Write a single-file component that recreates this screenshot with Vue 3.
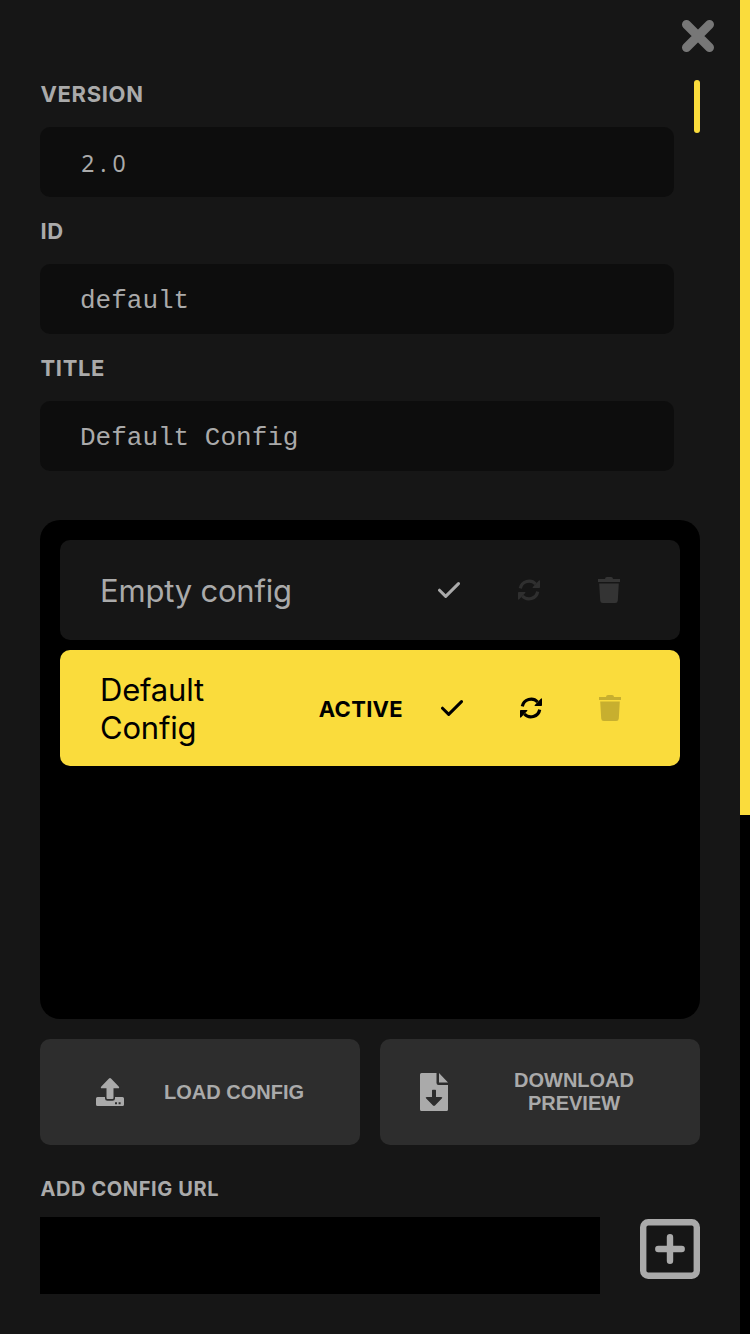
<script setup>
const fields = [
  { label: 'VERSION', value: '2.0', numeric: true },
  { label: 'ID', value: 'default' },
  { label: 'TITLE', value: 'Default Config' },
]
const configs = [
  { name: 'Empty config', active: false },
  { name: 'Default Config', active: true },
]
</script>

<template>
  <div class="page">
    <main class="panel">
      <header class="top">
        <svg class="close" viewBox="0 0 34 34"><path d="M5.5 5.5 28.5 28.5M28.5 5.5 5.5 28.5" /></svg>
      </header>

      <section class="details">
        <div class="fields">
          <div v-for="f in fields" :key="f.label" class="field">
            <label class="label">{{ f.label }}</label>
            <div v-if="f.numeric" class="value numeric"><span v-for="(ch, i) in f.value" :key="i">{{ ch }}</span></div>
            <div v-else class="value">{{ f.value }}</div>
          </div>
        </div>
        <div class="scroll-thumb"></div>
      </section>

      <section class="list">
        <article v-for="c in configs" :key="c.name" class="row" :class="{ active: c.active }">
          <span class="name">{{ c.name }}</span>
          <span v-if="c.active" class="tag">ACTIVE</span>
          <svg class="check" viewBox="0 0 22 16"><path d="M1.5 8.2 7.7 14.4 20.5 1.6" /></svg>
          <svg class="sync" viewBox="0 0 22 22">
            <path class="arc" d="M2.3 9.4A8.9 8.9 0 0 1 17.6 5M19.7 12.6A8.9 8.9 0 0 1 4.4 17" />
            <path d="M22 2V8.2Q22 9 21.2 9H15.2Q14 9 14.8 8.1L20.8 1.7Q22 .7 22 2ZM0 20V13.8Q0 13 .8 13H6.8Q8 13 7.2 13.9L1.2 20.3Q0 21.3 0 20Z" />
          </svg>
          <svg class="trash" viewBox="0 0 22 26">
            <path d="M0 2H7Q7 0 9 0H13Q15 0 15 2H22V5H0ZM1.2 6.5H20.8L19.8 23.5Q19.6 26 17.2 26H4.8Q2.4 26 2.2 23.5Z" />
          </svg>
        </article>
      </section>

      <section class="actions">
        <button class="load">
          <svg class="upload" viewBox="0 0 28 28">
            <path fill-rule="evenodd" d="M13 .5Q14 -.4 15 .5L22.7 8.5Q24 10.3 22 10.3H17.5V20Q17.5 21 16.5 21H11.5Q10.5 21 10.5 20V10.3H6Q4 10.3 5.3 8.5ZM1.5 19H9V20.5Q9 22.8 11.5 22.8H16.5Q19 22.8 19 20.5V19H26.5Q28 19 28 20.5V26.5Q28 28 26.5 28H1.5Q0 28 0 26.5V20.5Q0 19 1.5 19ZM19 24.3V26.3H21V24.3ZM22.6 24.3V26.3H24.6V24.3Z" />
          </svg>
          <span>LOAD CONFIG</span>
        </button>
        <button class="download">
          <svg class="file" viewBox="0 0 28 38">
            <path fill-rule="evenodd" d="M1.5 0H16.5V10Q16.5 12 18.5 12H28V36.5Q28 38 26.5 38H1.5Q0 38 0 36.5V1.5Q0 0 1.5 0ZM12 17.5V24H6.8Q5 24 6.2 25.6L13 32.5Q14 33.4 15 32.5L21.8 25.6Q23 24 21.2 24H16V17.5Q16 16.8 15.3 16.8H12.7Q12 16.8 12 17.5ZM19 0 28 9.5H19Z" />
          </svg>
          <span>DOWNLOAD PREVIEW</span>
        </button>
      </section>

      <section class="add">
        <label class="add-label">ADD CONFIG URL</label>
        <div class="add-row">
          <div class="url"></div>
          <svg class="plus" viewBox="0 0 60 60">
            <rect x="3.2" y="3.2" width="53.6" height="53.6" rx="5" />
            <path d="M18.3 30H41.7M30 18.3V41.7" />
          </svg>
        </div>
      </section>
    </main>
    <aside class="page-scroll"></aside>
  </div>
</template>

<style>
body {
  margin: 0;
  background: #000;
}
</style>

<style scoped>
.page {
  display: flex;
  width: 750px;
  height: 1334px;
  overflow: hidden;
  background: #000;
  color: #aaa;
  font-family: Inter, "Liberation Sans", sans-serif;
}
.page * {
  box-sizing: border-box;
}
.panel {
  width: 740px;
  height: 1334px;
  padding: 0 40px;
  background: #161616;
}
.page-scroll {
  width: 10px;
  height: 815px;
  background: #fadc3c;
}
svg {
  display: block;
  flex: none;
  fill: currentColor;
}
.top {
  height: 80px;
  display: flex;
  justify-content: flex-end;
  padding-top: 18.5px;
}
.close {
  width: 34px;
  height: 34px;
  margin-right: -15px;
  fill: none;
  stroke: #777;
  stroke-width: 9;
  stroke-linecap: round;
}
.details {
  height: 440px;
  display: flex;
  justify-content: space-between;
}
.fields {
  width: 634px;
}
.field {
  height: 137px;
}
.label {
  display: block;
  height: 47px;
  padding-left: .5px;
  font-weight: 700;
  font-size: 22px;
  line-height: 28px;
  letter-spacing: .65px;
}
.value {
  height: 70px;
  padding: 2px 40px 0;
  border-radius: 10px;
  background: #0d0d0d;
  font: 26px/70px "Courier New", "Liberation Mono", monospace;
}
.numeric {
  display: flex;
  padding-top: 1px;
  font: 23px/70px "Noto Sans", sans-serif;
}
.numeric span {
  width: 15.6px;
  text-align: center;
}
.scroll-thumb {
  width: 6px;
  height: 53px;
  border-radius: 3px;
  background: #fadc3c;
}
.list {
  height: 499px;
  padding: 20px;
  border-radius: 20px;
  background: #000;
  display: flex;
  flex-direction: column;
  gap: 10px;
}
.row {
  height: 100px;
  padding: 0 60px 0 40px;
  display: flex;
  align-items: center;
  border-radius: 10px;
  background: #161616;
}
.row.active {
  height: 116px;
  padding-right: 59px;
  background: #fadc3c;
  color: #000;
}
.name {
  flex: 1;
  font-size: 31px;
  line-height: 38px;
  letter-spacing: -.2px;
  padding-top: 2px;
}
.active .name {
  max-width: 180px;
  margin-right: auto;
}
.tag {
  font-weight: 700;
  font-size: 22px;
  letter-spacing: .3px;
  margin-right: 38px;
  padding-top: 2px;
}
.check {
  width: 22px;
  height: 16px;
  margin-right: 58px;
  fill: none;
  stroke: currentColor;
  stroke-width: 3;
  stroke-linecap: round;
  stroke-linejoin: round;
}
.active .check,
.active .sync {
  margin-right: 57px;
}
.sync {
  width: 22px;
  height: 22px;
  margin-right: 58px;
  opacity: .17;
}
.active .sync {
  opacity: 1;
}
.arc {
  fill: none;
  stroke: currentColor;
  stroke-width: 3.2;
}
.trash {
  width: 22px;
  height: 26px;
  opacity: .2;
}
.actions {
  display: flex;
  gap: 20px;
  margin-top: 20px;
}
button {
  width: 320px;
  height: 106px;
  padding: 0 56px;
  display: flex;
  align-items: center;
  border: 0;
  border-radius: 10px;
  background: #2d2d2d;
  color: #aaa;
  font: bold 20px/23px "Liberation Sans", Arial, sans-serif;
}
button span {
  flex: 1;
  text-align: center;
}
.load span {
  margin-left: 40px;
  white-space: nowrap;
}
.upload {
  width: 28px;
  height: 28px;
}
.download {
  padding: 0 40px;
}
.download span {
  margin-left: 40px;
}
.file {
  width: 28px;
  height: 38px;
}
.add-label {
  display: block;
  margin-top: 32px;
  height: 40px;
  padding-left: .5px;
  font-weight: 700;
  font-size: 20px;
  line-height: 24px;
  letter-spacing: .6px;
}
.add-row {
  display: flex;
  justify-content: space-between;
}
.url {
  width: 560px;
  height: 77px;
  background: #000;
}
.plus {
  width: 60px;
  height: 60px;
  margin-top: 2px;
  fill: none;
  stroke: currentColor;
  stroke-width: 6.4;
  stroke-linecap: round;
}
</style>
